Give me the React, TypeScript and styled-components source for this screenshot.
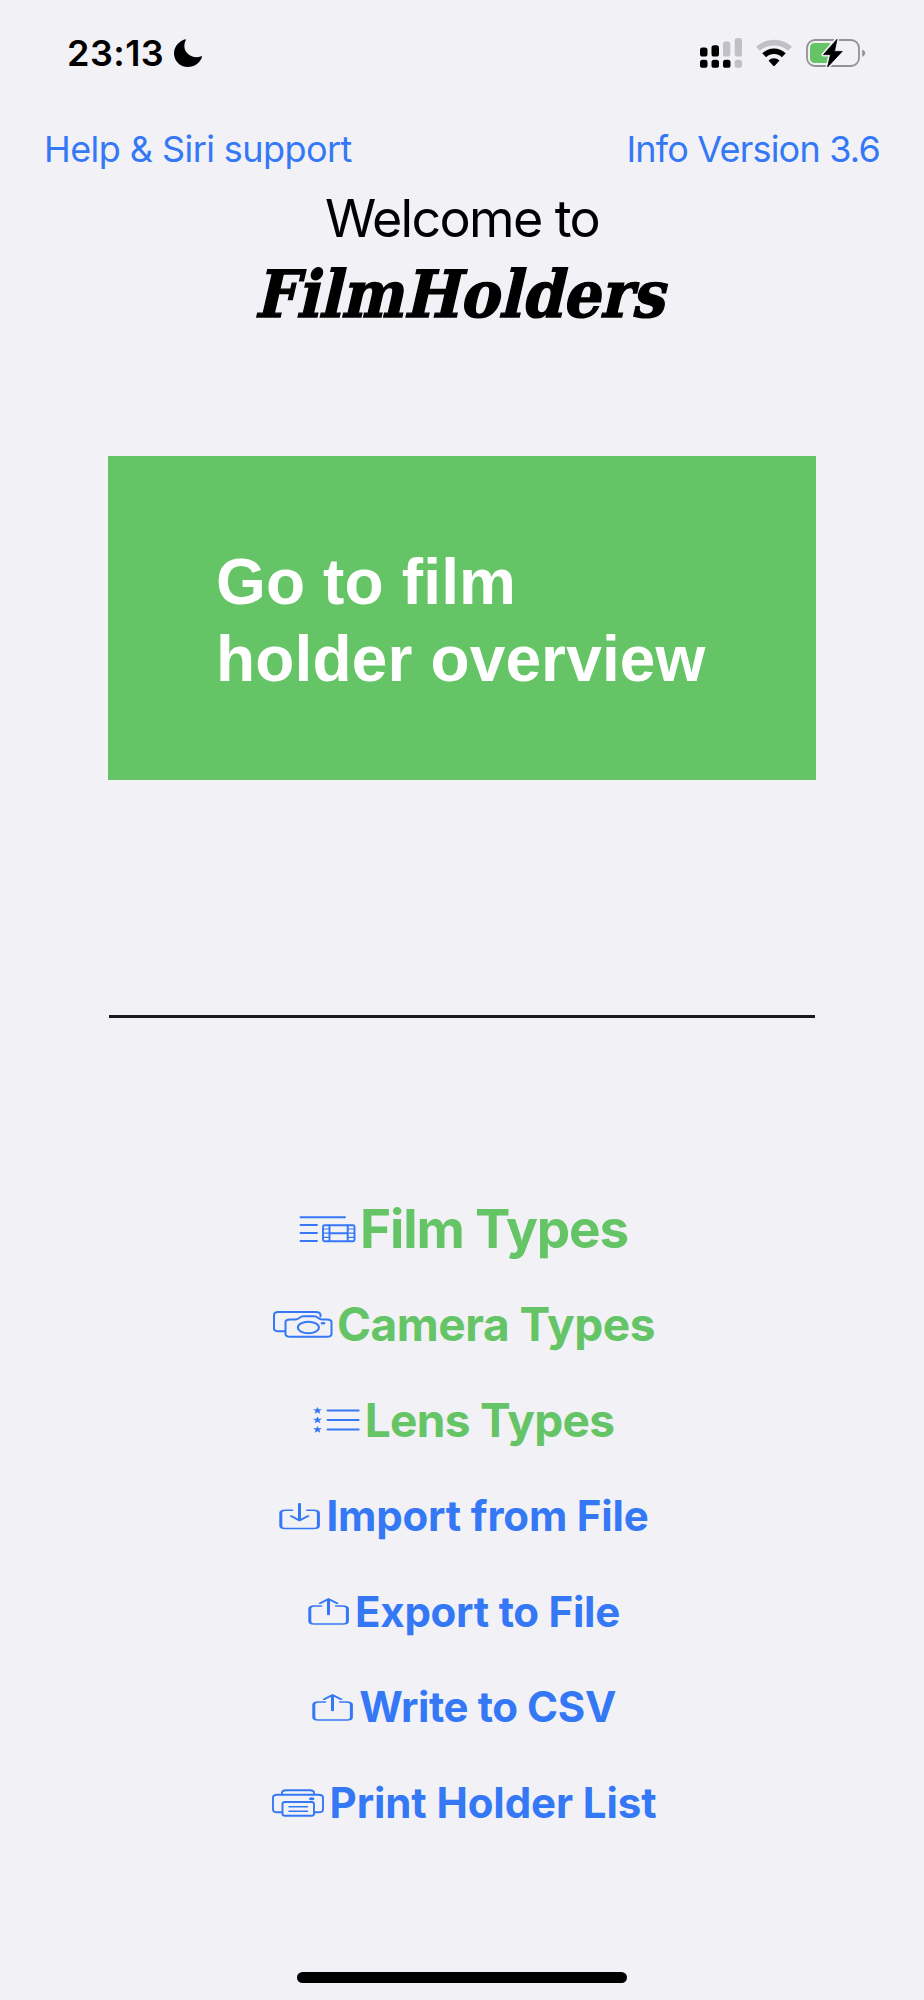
import React from "react";
import styled, { createGlobalStyle } from "styled-components";

const BLUE = "#3478f6";
const GREEN = "#65c466";
const BG = "#f2f1f6";

const GlobalStyle = createGlobalStyle`
  * { box-sizing: border-box; }
  body { margin: 0; background: ${BG}; }
`;

const Screen = styled.div`
  width: 924px;
  height: 2000px;
  display: flex;
  flex-direction: column;
  align-items: center;
  background: ${BG};
  font-family: Inter, "Liberation Sans", sans-serif;
  overflow: hidden;
`;

const StatusBar = styled.header`
  width: 100%;
  height: 105px;
  padding: 32px 58px 0 67px;
  display: flex;
  justify-content: space-between;
  align-items: flex-start;
`;

const StatusGroup = styled.div<{ $gap: number }>`
  display: flex;
  align-items: center;
  height: 42px;
  gap: ${(p) => p.$gap}px;
`;

const Clock = styled.span`
  font-size: 36px;
  line-height: 42px;
  font-weight: 600;
  letter-spacing: 0.45px;
`;

const LinkBar = styled.nav`
  width: 100%;
  height: 81px;
  padding: 22px 44px 0 44px;
  display: flex;
  justify-content: space-between;
`;

const TextLink = styled.a<{ $spacing: number }>`
  color: ${BLUE};
  font-size: 36px;
  line-height: 44px;
  letter-spacing: ${(p) => p.$spacing}px;
  white-space: nowrap;
`;

const Welcome = styled.p`
  margin: 0;
  height: 67px;
  font-size: 52px;
  line-height: 66px;
  letter-spacing: -1.65px;
  white-space: nowrap;
`;

const Title = styled.h1`
  margin: 0;
  height: 80px;
  padding-left: 5px;
  font-family: "DejaVu Serif", serif;
  font-size: 65px;
  line-height: 82px;
  font-weight: 700;
  transform: skewX(-13deg) scaleX(0.908);
  -webkit-text-stroke: 1.4px #000;
  white-space: nowrap;
`;

const OverviewButton = styled.button`
  width: 708px;
  height: 324px;
  margin: 123px 0 0;
  padding: 6px 0 0 108px;
  border: 0;
  background: ${GREEN};
  color: #fff;
  display: flex;
  align-items: center;
  text-align: left;
  font-family: "Liberation Sans", Arial, sans-serif;
  font-size: 64px;
  font-weight: 700;
  line-height: 77px;
  letter-spacing: 0.15px;
  white-space: nowrap;
`;

const Divider = styled.hr`
  width: 706px;
  height: 3px;
  margin: 235px 0 0;
  border: 0;
  background: #1a1a1e;
`;

const Menu = styled.ul`
  list-style: none;
  margin: 163px 0 0;
  padding: 0 0 0 3px;
  width: 100%;
`;

const MenuItem = styled.li<{ $color: string; $size: number; $spacing: number; $gap: number }>`
  height: 95.6px;
  display: flex;
  align-items: center;
  justify-content: center;
  gap: ${(p) => p.$gap}px;
  color: ${(p) => p.$color};
  font-size: ${(p) => p.$size}px;
  font-weight: 700;
  letter-spacing: ${(p) => p.$spacing}px;
  white-space: nowrap;
`;

const HomeIndicator = styled.div`
  width: 330px;
  height: 11px;
  margin: auto 0 17px;
  border-radius: 6px;
  background: #000;
`;

const Glyph = styled.svg`
  flex: none;
  display: block;
  fill: none;
  stroke: ${BLUE};
  stroke-width: 1.5;
  stroke-linecap: round;
  stroke-linejoin: round;
`;

const StatusGlyph = styled.svg`
  display: block;
  flex: none;
`;

const Moon = () => (
  <StatusGlyph width="30" height="30" viewBox="0 0 30 30">
    <path d="M12.2 1.2C7 2.8 1 7.800 1 15.300C1 23 7 29 14.800 29C21.500 29 27 25 29 19C29.200 18.300 28.600 18 28 18.200C25.500 19.400 22 19.600 18.800 18.200C11.500 15.200 9.800 8.200 12.700 2.200C13 1.500 12.800 1 12.200 1.200Z" />
  </StatusGlyph>
);

const Signal = () => (
  <StatusGlyph width="42" height="30" viewBox="0 0 42 30">
    <g fill="#c1c0c6">
      <rect x="23" y="3.500" width="7.300" height="15" rx="2.600" />
      <rect x="34.700" y="0" width="7.300" height="18.500" rx="2.600" />
      <rect x="34.700" y="21.800" width="7.300" height="8" rx="2.600" />
    </g>
    <rect x="0" y="9.500" width="7.500" height="9" rx="2.600" />
    <rect x="11.500" y="7.200" width="7.500" height="11.300" rx="2.600" />
    <rect x="0" y="21.800" width="7.500" height="8" rx="2.600" />
    <rect x="11.500" y="21.800" width="7.500" height="8" rx="2.600" />
    <rect x="23" y="21.800" width="7.500" height="8" rx="2.600" />
  </StatusGlyph>
);

const Wifi = () => (
  <StatusGlyph width="36" height="28" viewBox="0 0 36 28">
    <path d="M2 9.800C11 1.500 25 1.500 34 9.800" fill="none" stroke="#c1c0c6" strokeWidth="5.600" />
    <path d="M8.200 16.200C13.800 10.900 22.200 10.900 27.800 16.200" fill="none" stroke="#000" strokeWidth="5.600" />
    <path d="M12.500 21.600C15.500 18.300 20.500 18.300 23.500 21.600L18.800 26.700Q18 27.500 17.200 26.700Z" />
  </StatusGlyph>
);

const Battery = () => (
  <StatusGlyph width="60" height="32" viewBox="0 0 60 32">
    <rect x="1" y="3" width="52" height="26" rx="8" fill="none" stroke="#939298" strokeWidth="1.800" />
    <path d="M56.200 12.500Q59.200 13.700 59.200 16.200T56.200 19.900Z" fill="#939298" />
    <path d="M9 6H24V26H9Q4 26 4 21V11Q4 6 9 6Z" fill={GREEN} />
    <path d="M31 2.300L17.500 17.600H24.500L21.600 30L36.200 14.400H28.500Z" fill="#000" stroke={BG} strokeWidth="4" strokeLinejoin="round" />
    <path d="M31 2.300L17.500 17.600H24.500L21.600 30L36.200 14.400H28.500Z" fill="#000" stroke="#000" strokeWidth="0.800" strokeLinejoin="round" />
  </StatusGlyph>
);

const FilmIcon = () => (
  <Glyph width="57" height="28" viewBox="0 0 57 28">
    <g strokeWidth="1.900">
      <path d="M1.500 2.300H46M1.500 10H18M1.500 18H18M1.500 26H18" />
      <rect x="24" y="10.200" width="31.500" height="16" rx="1.500" />
      <path d="M30.500 10.500V26M48.700 10.500V26M30.500 18.200H48.700" />
    </g>
    <path strokeWidth="1.200" d="M25 14H30M25 18.200H30M25 22.300H30M49 14H55M49 18.200H55M49 22.300H55" />
  </Glyph>
);

const CameraIcon = () => (
  <Glyph width="61" height="28" viewBox="0 0 61 28">
    <g strokeWidth="2">
      <path d="M13 21.300H6.500Q2 21.300 2 18.500V5Q2 2 6.500 2H43.500Q48.500 2 48.500 5V6.500" />
      <path d="M18 9.500H23.500C27 9.500 27.500 6.300 31.500 6.300H42C46 6.300 46.500 9.500 50 9.500H55Q59.500 9.500 59.500 12.200V24Q59.500 26.800 55 26.800H18Q13.500 26.800 13.500 24V12.200Q13.500 9.500 18 9.500Z" />
      <ellipse cx="36.400" cy="17.500" rx="10.500" ry="5.700" />
    </g>
    <ellipse cx="51" cy="13.200" rx="2.400" ry="1.300" fill={BLUE} stroke="none" />
  </Glyph>
);

const LensIcon = () => (
  <Glyph width="47" height="28" viewBox="0 0 47 28">
    {[4.5, 14, 23.5].map((y) => (
      <g key={y}>
        <path
          transform={`translate(4.500 ${y})`}
          fill={BLUE}
          stroke="none"
          d="M0 -3.600L1.200 -1.200H4.500L1.900 .6L2.800 3.200L0 1.700L-2.800 3.200L-1.900 .6L-4.500 -1.200H-1.200Z"
        />
        <path strokeWidth="2.100" d={`M14.600 ${y}H45.600`} />
      </g>
    ))}
  </Glyph>
);

const ImportIcon = () => (
  <Glyph width="43" height="28" viewBox="0 0 43 28">
    <g transform="scale(2 1)" strokeWidth="1.500">
      <path d="M7 8.200H3.700Q1.400 8.200 1.400 11V23.800Q1.400 26.600 3.700 26.600H17.700Q20.200 26.600 20.200 23.800V11Q20.200 8.200 17.700 8.200H14.600" />
      <path d="M10.750 1.800V18.200M6.600 14L10.750 18.500L15 14" />
    </g>
  </Glyph>
);

const ExportIcon = () => (
  <Glyph width="43" height="28" viewBox="0 0 43 28">
    <g transform="scale(2 1)" strokeWidth="1.500">
      <path d="M7 9H3.700Q1.400 9 1.400 11.800V24.200Q1.400 27 3.700 27H17.700Q20.200 27 20.200 24.200V11.800Q20.200 9 17.700 9H14.600" />
      <path d="M10.750 2V17.500M6.600 6.300L10.750 2L15 6.300" />
    </g>
  </Glyph>
);

const PrinterIcon = () => (
  <Glyph width="54" height="29" viewBox="0 0 54 29">
    <g strokeWidth="1.900">
      <path d="M11 24.200H6.500Q2 24.200 2 21.400V9.500Q2 6.700 6.500 6.700H47.500Q52 6.700 52 9.500V21.400Q52 24.200 47.500 24.200H43" />
      <path d="M11 6.500V5Q11 2.200 15 2.200H39Q43 2.200 43 5V6.500" />
      <path d="M14 14H40.500Q43 14 43 16V25.800Q43 27.800 40.500 27.800H14Q11.500 27.800 11.500 25.800V16Q11.500 14 14 14Z" />
      <path strokeWidth="1.500" d="M18 18.700H36.500M18 23.200H36.500" />
    </g>
    <ellipse cx="40.700" cy="10.700" rx="2.800" ry="1.500" fill={BLUE} stroke="none" />
  </Glyph>
);

const items = [
  { label: "Film Types", Icon: FilmIcon, color: GREEN, size: 53, spacing: -1.15, gap: 4 },
  { label: "Camera Types", Icon: CameraIcon, color: GREEN, size: 46, spacing: -0.45, gap: 4 },
  { label: "Lens Types", Icon: LensIcon, color: GREEN, size: 46, spacing: -0.7, gap: 5 },
  { label: "Import from File", Icon: ImportIcon, color: BLUE, size: 42, spacing: -0.17, gap: 5 },
  { label: "Export to File", Icon: ExportIcon, color: BLUE, size: 42, spacing: -0.25, gap: 5 },
  { label: "Write to CSV", Icon: ExportIcon, color: BLUE, size: 42, spacing: -0.4, gap: 5 },
  { label: "Print Holder List", Icon: PrinterIcon, color: BLUE, size: 42, spacing: -0.1, gap: 5 },
];

export default function App() {
  return (
    <>
      <GlobalStyle />
      <Screen>
        <StatusBar>
          <StatusGroup $gap={9}>
            <Clock>23:13</Clock>
            <Moon />
          </StatusGroup>
          <StatusGroup $gap={14}>
            <Signal />
            <Wifi />
            <Battery />
          </StatusGroup>
        </StatusBar>
        <LinkBar>
          <TextLink $spacing={-0.57}>Help &amp; Siri support</TextLink>
          <TextLink $spacing={-0.8}>Info Version 3.6</TextLink>
        </LinkBar>
        <Welcome>Welcome to</Welcome>
        <Title>FilmHolders</Title>
        <OverviewButton>
          Go to film
          <br />
          holder overview
        </OverviewButton>
        <Divider />
        <Menu>
          {items.map(({ label, Icon, color, size, spacing, gap }) => (
            <MenuItem key={label} $color={color} $size={size} $spacing={spacing} $gap={gap}>
              <Icon />
              <span>{label}</span>
            </MenuItem>
          ))}
        </Menu>
        <HomeIndicator />
      </Screen>
    </>
  );
}
